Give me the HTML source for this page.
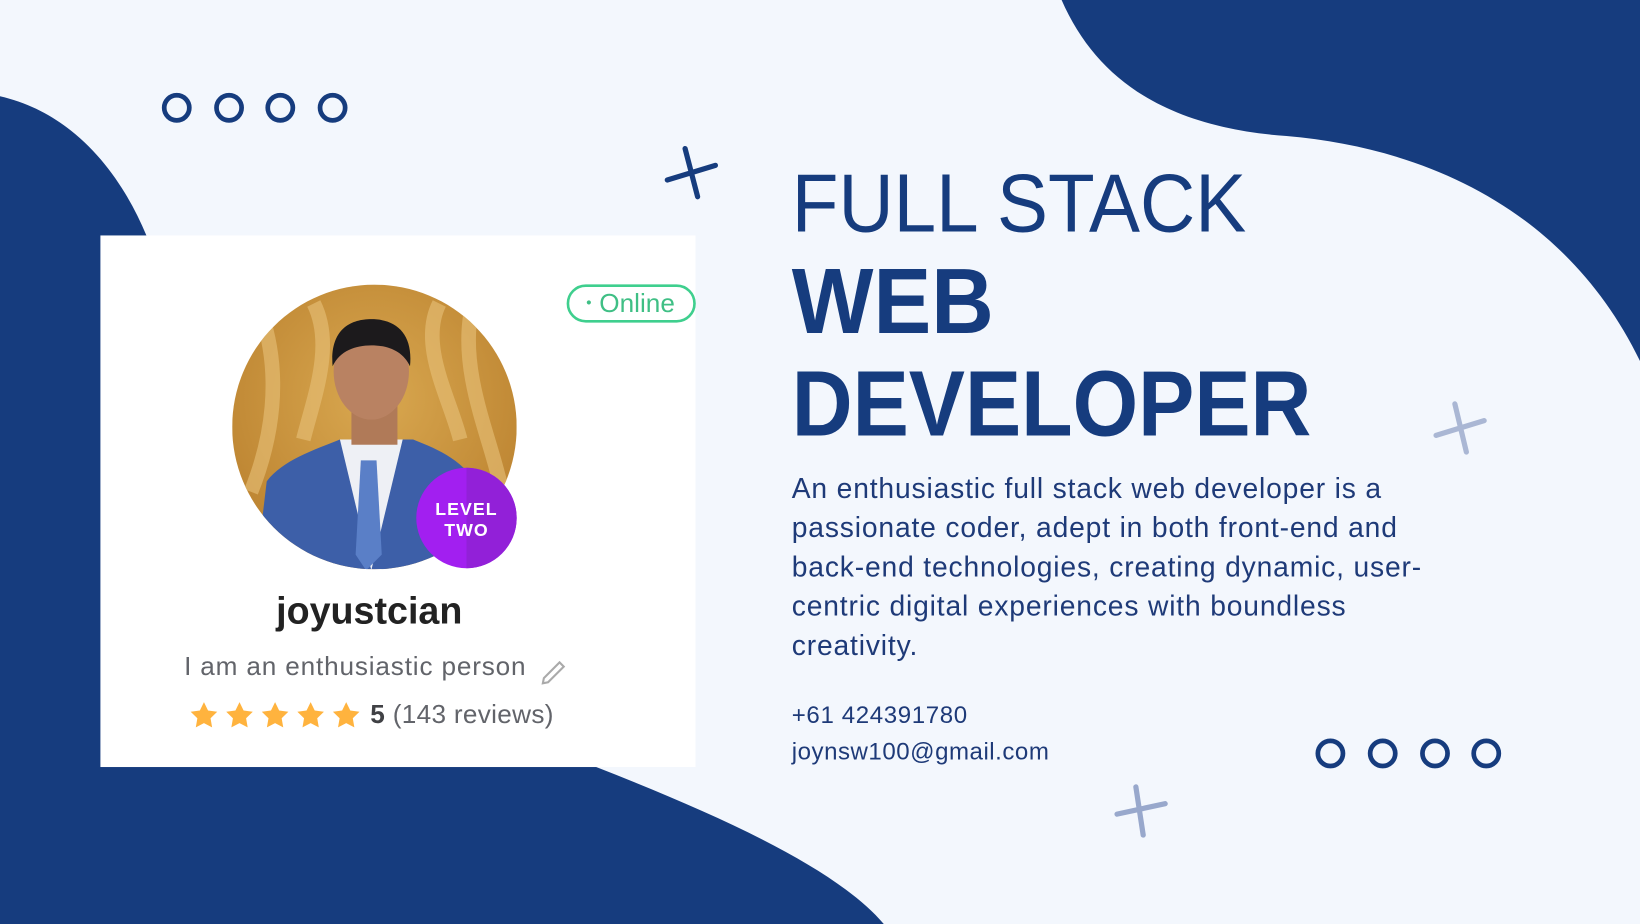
<!DOCTYPE html>
<html><head><meta charset="utf-8"><style>
html,body{margin:0;padding:0;width:1640px;height:924px;overflow:hidden;background:#f3f7fd}
#w{position:absolute;left:0;top:0;width:1568px;height:883px;transform:scale(1.045918,1.046433);transform-origin:0 0;font-family:"Liberation Sans",sans-serif}
.a{position:absolute;white-space:nowrap}
</style></head><body><div id="w">
<svg class="a" style="left:0;top:0" width="1568" height="883" viewBox="0 0 1568 883">
<path d="M0,92 C70,108 115,165 140,225 L600,225 L570,733 C690,780 800,830 845,883 L0,883 Z" fill="#163c7e"/>
<path d="M1015,0 C1050,80 1120,122 1230,130 C1370,142 1500,205 1568,345 L1568,0 Z" fill="#163c7e"/>
<g fill="none" stroke="#163c7e" stroke-width="4.5">
<circle cx="169" cy="103" r="12"/><circle cx="219" cy="103" r="12"/><circle cx="268" cy="103" r="12"/><circle cx="318" cy="103" r="12"/>
<circle cx="1272" cy="720" r="12"/><circle cx="1322" cy="720" r="12"/><circle cx="1372" cy="720" r="12"/><circle cx="1421" cy="720" r="12"/>
</g>
<g stroke-linecap="round" stroke-width="5">
<path d="M655,142 L667,188 M638,172 L684,158" stroke="#163c7e"/>
<path d="M1391,386 L1402,432 M1373,416 L1419,402" stroke="#aab7d4"/>
<path d="M1086,752 L1093,798 M1068,778 L1114,768" stroke="#98a8cc"/>
</g>
<rect x="96" y="225" width="569" height="508" fill="#fff"/>
<defs><clipPath id="cp"><circle cx="358" cy="408" r="136"/></clipPath>
<radialGradient id="bg" cx="0.5" cy="0.4" r="0.7"><stop offset="0" stop-color="#d9a850"/><stop offset="1" stop-color="#b87e2c"/></radialGradient></defs>
<g clip-path="url(#cp)">
<rect x="222" y="272" width="272" height="272" fill="url(#bg)"/>
<path d="M250,300 C270,360 260,420 240,470 M450,300 C440,360 470,420 480,470 M300,290 C320,330 300,380 290,420 M420,290 C400,330 430,380 440,420" stroke="#e8c27a" stroke-width="14" fill="none" opacity=".6"/>
<path d="M245,544 L255,460 C270,440 300,430 325,420 L395,420 C420,430 445,440 460,470 L470,544 Z" fill="#3d5fa8"/>
<path d="M325,420 L355,545 L385,420 Z" fill="#eef0f5"/>
<path d="M345,440 L360,440 L365,530 L350,545 L340,530 Z" fill="#5a7fc7"/>
<rect x="336" y="385" width="44" height="40" fill="#b07a58"/>
<ellipse cx="355" cy="355" rx="36" ry="46" fill="#b98262"/>
<path d="M318,350 C315,315 335,305 355,305 C380,305 395,320 392,350 C385,335 370,330 355,330 C340,330 325,335 318,350 Z" fill="#1c1a1c"/>
</g>
<circle cx="446" cy="495" r="48" fill="#a21ff0"/>
<path d="M446,447 A48,48 0 0 1 446,543 Z" fill="#9220d8"/>
<text x="446" y="492" text-anchor="middle" font-family="Liberation Sans" font-weight="bold" font-size="17" fill="#fff" letter-spacing="1">LEVEL</text>
<text x="446" y="512" text-anchor="middle" font-family="Liberation Sans" font-weight="bold" font-size="17" fill="#fff" letter-spacing="1">TWO</text>
<rect x="543" y="273" width="121" height="34" rx="17" fill="#fff" stroke="#3fcf8e" stroke-width="2.5"/>
<circle cx="563" cy="289" r="2" fill="#3fbf85"/>
<text x="573" y="298" font-family="Liberation Sans" font-size="25" fill="#3fbf85">Online</text>
<g fill="#ffb33e">
<path id="st" d="M195,671 l3.9,8 8.8,1.2 -6.4,6.2 1.5,8.7 -7.8,-4.1 -7.8,4.1 1.5,-8.7 -6.4,-6.2 8.8,-1.2 Z"/>
<use href="#st" x="34"/><use href="#st" x="68"/><use href="#st" x="102"/><use href="#st" x="136"/>
</g>
<path d="M520,648 L535,633 L539,637 L524,652 L519,653 Z" fill="none" stroke="#aaa" stroke-width="2"/>
</svg>
<div class="a" style="left:264px;top:563px;font-size:36px;font-weight:bold;color:#222">joyustcian</div>
<div class="a" style="left:176px;top:623px;font-size:25px;letter-spacing:0.8px;color:#62646a">I am an enthusiastic person</div>
<div class="a" style="left:354px;top:669px;font-size:25px;letter-spacing:0.3px;color:#62646a"><b style="color:#404145">5</b> (143 reviews)</div>

<div class="a" style="left:757px;top:148px;font-size:79px;color:#163c7e;transform:scaleX(.925);transform-origin:0 0">FULL STACK</div>
<div class="a" style="left:757px;top:236px;font-size:89px;font-weight:bold;color:#163c7e;transform:scaleX(.93);transform-origin:0 0">WEB</div>
<div class="a" style="left:757px;top:334px;font-size:89px;font-weight:bold;color:#163c7e;transform:scaleX(.905);transform-origin:0 0">DEVELOPER</div>
<div class="a" style="left:757px;top:449px;font-size:27px;letter-spacing:0.8px;line-height:37.4px;color:#1e3a78">An enthusiastic full stack web developer is a<br>passionate coder, adept in both front-end and<br>back-end technologies, creating dynamic, user-<br>centric digital experiences with boundless<br>creativity.</div>
<div class="a" style="left:757px;top:670px;font-size:23px;letter-spacing:0.6px;color:#1e3a78">+61 424391780</div>
<div class="a" style="left:757px;top:705px;font-size:23px;letter-spacing:0.5px;color:#1e3a78">joynsw100@gmail.com</div>
</div></body></html>
